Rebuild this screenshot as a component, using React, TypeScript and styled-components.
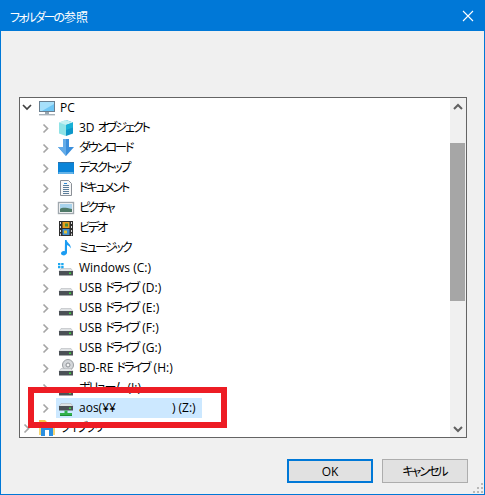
import React from "react";
import styled, { createGlobalStyle } from "styled-components";

const Global = createGlobalStyle`
  html, body { margin: 0; padding: 0; background: #f0f0f0; }
  #root { width: 485px; height: 495px; }
`;

const FONT = `"Open Sans", "Noto Sans CJK JP", sans-serif`;

const Dialog = styled.div`
  position: relative;
  box-sizing: border-box;
  width: 485px;
  height: 495px;
  border: 1px solid #0078d7;
  background: #f0f0f0;
  display: flex;
  flex-direction: column;
  font-family: ${FONT};
  font-feature-settings: "palt";
  overflow: hidden;
`;

const TitleBar = styled.div`
  height: 30px;
  background: #0078d7;
  color: #fff;
  display: flex;
  align-items: center;
  justify-content: space-between;
  padding: 0 10px 0 9px;
  font-size: 12px;
  font-family: "Noto Sans CJK JP", sans-serif;
  flex: none;
`;

const Kana = styled.span`
  letter-spacing: -2px;
  margin-right: 1px;
`;

const Body = styled.div`
  flex: 1;
  display: flex;
  flex-direction: column;
  padding: 66px 17px 0 18px;
`;

const TreeFrame = styled.div`
  box-sizing: border-box;
  height: 341px;
  border: 1px solid #646464;
  background: #fff;
  display: flex;
  overflow: hidden;
  flex: none;
`;

const TreeList = styled.div`
  flex: 1;
  min-width: 0;
  overflow: hidden;
`;

const Row = styled.div<{ $depth: number }>`
  height: 20px;
  display: flex;
  align-items: center;
  padding-left: ${(p) => (p.$depth === 0 ? 1 : 20)}px;
  font-size: 12px;
  line-height: 20px;
  color: #000;
  white-space: pre;
`;

const Chevron = styled.svg`
  width: 17px;
  height: 20px;
  flex: none;
`;

const RowItem = styled.div<{ $selected?: boolean }>`
  display: flex;
  align-items: center;
  height: 20px;
  margin-left: ${(p) => (p.$selected ? -1 : 0)}px;
  padding-left: ${(p) => (p.$selected ? 1 : 0)}px;
  padding-right: ${(p) => (p.$selected ? 6 : 2)}px;
  background: ${(p) => (p.$selected ? "#cce8ff" : "transparent")};
`;

const IconSlot = styled.span`
  width: 18px;
  height: 18px;
  margin-right: 4px;
  display: block;
  flex: none;
  svg { display: block; }
`;

const PathGap = styled.span`
  display: inline-block;
  width: 56px;
`;

const Scrollbar = styled.div`
  width: 16px;
  flex: none;
  background: #f0f0f0;
  display: flex;
  flex-direction: column;
`;

const ScrollButton = styled.div`
  height: 17px;
  flex: none;
  display: flex;
  align-items: center;
  justify-content: center;
`;

const ScrollTrack = styled.div`
  flex: 1;
  padding-top: 28px;
`;

const ScrollThumb = styled.div`
  height: 158px;
  width: 15px;
  background: #a6a6a6;
`;

const Footer = styled.div`
  display: flex;
  justify-content: flex-end;
  gap: 9px;
  padding-top: 21px;
  margin-right: -1px;
`;

const Button = styled.button<{ $primary?: boolean }>`
  box-sizing: border-box;
  width: 86px;
  height: 24px;
  margin: 0;
  padding: 0;
  background: #e1e1e1;
  border: ${(p) => (p.$primary ? "2px solid #0078d7" : "1px solid #adadad")};
  font-family: ${FONT};
  font-feature-settings: "palt";
  font-size: 12px;
  color: #000;
`;

const Annotation = styled.div`
  position: absolute;
  left: 27px;
  top: 386px;
  width: 199px;
  height: 41px;
  box-sizing: border-box;
  border: 6px solid #ed1c24;
`;

const Grip = styled.svg`
  position: absolute;
  right: 0;
  bottom: 0;
  width: 12px;
  height: 12px;
`;

const Label = ({ text }: { text: string }) => (
  <span>
    {text.split(/([ァ-ヶーぁ-ん]+)/).map((part, i) =>
      i % 2 === 1 ? <Kana key={i}>{part}</Kana> : part
    )}
  </span>
);

const Monitor = () => (
  <svg width="18" height="18" viewBox="0 0 18 18">
    <rect x="1.500" y="2.500" width="15" height="10" fill="#6ec6f5" stroke="#6a7f90" />
    <path d="M2 3h14v2L4 12H2z" fill="#a6e0fb" />
    <rect x="7" y="13" width="4" height="2" fill="#9aa7b0" />
    <rect x="1" y="15" width="16" height="1.400" fill="#a8b2ba" />
  </svg>
);
const Cube = () => (
  <svg width="18" height="18" viewBox="0 0 18 18">
    <path d="M9 1l7 2.500v11L9 17z" fill="#0d97c9" />
    <path d="M9 1L2 3.500v11L9 17z" fill="#8fe3e6" />
    <path d="M2 3.500L9 1l7 2.500L9 6z" fill="#c4f1f2" />
    <path d="M9 6l7-2.500v5L9 11z" fill="#18b1d6" />
  </svg>
);
const DownArrow = () => (
  <svg width="18" height="18" viewBox="0 0 18 18">
    <path d="M6 0h6v8h5l-8 9-8-9h5z" fill="#3b8fdc" />
    <path d="M6 0h3v17L1 8h5z" fill="#64ace8" />
  </svg>
);
const Desktop = () => (
  <svg width="18" height="18" viewBox="0 0 18 18">
    <rect x="1" y="3" width="16" height="12" fill="#0a84d8" />
    <rect x="1.500" y="13.500" width="15" height="1" fill="#bfe3fa" />
    <rect x="1" y="3" width="16" height="1" fill="#2d6ea3" />
  </svg>
);
const Doc = () => (
  <svg width="18" height="18" viewBox="0 0 18 18">
    <path d="M3.500 1.500h8l3 3v12h-11z" fill="#f7f7f7" stroke="#8b9097" />
    <path d="M6 6.500h6M6 8.500h6M6 10.500h6M6 12.500h6M6 14.500h6" stroke="#5a7d9a" />
    <path d="M7 4.500h3" stroke="#2a8bd8" />
  </svg>
);
const Picture = () => (
  <svg width="18" height="18" viewBox="0 0 18 18">
    <rect x="1.500" y="3.500" width="15" height="11" fill="#fff" stroke="#a0a8ae" strokeWidth="1.400" />
    <rect x="3" y="5" width="12" height="8" fill="#a9d3ec" />
    <path d="M3 10c3-2 6-1 12 0v3H3z" fill="#4f7a68" />
  </svg>
);
const Film = () => (
  <svg width="18" height="18" viewBox="0 0 18 18">
    <rect x="2" y="2" width="14" height="15" fill="#2e2e2e" />
    <path d="M3 3h1v2H3zM3 7h1v2H3zM3 11h1v2H3zM3 14.500h1v2H3zM14 3h1v2h-1zM14 7h1v2h-1zM14 11h1v2h-1zM14 14.500h1v2h-1z" fill="#ddd" />
    <rect x="5.500" y="3" width="7" height="6" fill="#e8a01f" />
    <rect x="5.500" y="10" width="7" height="6" fill="#3f8fcf" />
    <rect x="8" y="4.500" width="3" height="3" fill="#4a8f3a" />
    <rect x="7" y="11.500" width="3" height="3" fill="#e2c23a" />
  </svg>
);
const Note = () => (
  <svg width="18" height="18" viewBox="0 0 18 18">
    <path d="M8 1h1.600c.3 3 4.700 4 4.100 8.500-.6-2-2.700-3.200-3.700-3.500V13.500c0 2-2.200 3.200-4.200 2.800-2-.4-2.400-2.400-1-3.600 1-.8 2-.9 3-.5z" fill="#1b9cf2" />
  </svg>
);
const DriveBody = ({ top = 9.500 }: { top?: number }) => (
  <>
    <path d={`M4 ${top}h10l2 3H2z`} fill="#dfe2e4" stroke="#a9adb1" strokeWidth=".5" />
    <rect x="2" y={top + 2.5} width="14" height="4.500" fill="#4b5055" />
    <rect x="12" y={top + 4} width="2" height="1.500" fill="#3fd23f" />
  </>
);
const DriveIcon = () => (
  <svg width="18" height="18" viewBox="0 0 18 18"><DriveBody /></svg>
);
const WinDrive = () => (
  <svg width="18" height="18" viewBox="0 0 18 18">
    <DriveBody />
    <path d="M1 4h2.400v2.200H1zM4.200 4h2.400v2.200H4.200zM1 7h2.400v2.200H1zM4.200 7h2.400v2.200H4.200z" fill="#1fa8f0" />
  </svg>
);
const DiscDrive = () => (
  <svg width="18" height="18" viewBox="0 0 18 18">
    <circle cx="11" cy="6" r="5.500" fill="#d4d7da" stroke="#9a9ea2" />
    <circle cx="11" cy="6" r="2" fill="#f4f4f4" stroke="#8d9195" />
    <DriveBody />
  </svg>
);
const NetDrive = () => (
  <svg width="18" height="18" viewBox="0 0 18 18">
    <DriveBody top={4.500} />
    <path d="M7.500 11.500h3v2.500H15v3H3v-3h4.500z" fill="#31b24a" />
    <path d="M3 16h12v1H3z" fill="#1f8f38" />
  </svg>
);
const Library = () => (
  <svg width="18" height="18" viewBox="0 0 18 18">
    <path d="M1 1h6l2 2H1z" fill="#f5c84a" />
    <rect x="1" y="3" width="16" height="13" fill="#f7d774" />
    <rect x="3" y="6" width="12" height="11" fill="#2b8fe0" />
    <rect x="7" y="11" width="4" height="6" fill="#fff" />
  </svg>
);

type Item = { label: string; suffix?: string; icon: React.ReactNode; depth: number; open?: boolean; selected?: boolean };

const items: Item[] = [
  { label: "PC", icon: <Monitor />, depth: 0, open: true },
  { label: "3D オブジェクト", icon: <Cube />, depth: 1 },
  { label: "ダウンロード", icon: <DownArrow />, depth: 1 },
  { label: "デスクトップ", icon: <Desktop />, depth: 1 },
  { label: "ドキュメント", icon: <Doc />, depth: 1 },
  { label: "ピクチャ", icon: <Picture />, depth: 1 },
  { label: "ビデオ", icon: <Film />, depth: 1 },
  { label: "ミュージック", icon: <Note />, depth: 1 },
  { label: "Windows (C:)", icon: <WinDrive />, depth: 1 },
  { label: "USB ドライブ (D:)", icon: <DriveIcon />, depth: 1 },
  { label: "USB ドライブ (E:)", icon: <DriveIcon />, depth: 1 },
  { label: "USB ドライブ (F:)", icon: <DriveIcon />, depth: 1 },
  { label: "USB ドライブ (G:)", icon: <DriveIcon />, depth: 1 },
  { label: "BD-RE ドライブ (H:)", icon: <DiscDrive />, depth: 1 },
  { label: "ボリューム (I:)", icon: <DriveIcon />, depth: 1 },
  { label: "aos(¥¥", suffix: ") (Z:)", icon: <NetDrive />, depth: 1, selected: true },
  { label: "ライブラリ", icon: <Library />, depth: 0 },
];

export default function App() {
  return (
    <>
      <Global />
      <Dialog>
        <TitleBar>
          <Label text="フォルダーの参照" />
          <svg width="12" height="12" viewBox="0 0 12 12">
            <path d="M1 1l10 10M11 1L1 11" stroke="#fff" strokeWidth="1.100" fill="none" />
          </svg>
        </TitleBar>
        <Body>
          <TreeFrame>
            <TreeList>
              {items.map((it) => (
                <Row key={it.label} $depth={it.depth}>
                  <Chevron viewBox="0 0 17 20">
                    {it.open ? (
                      <path d="M2 7l4 4 4-4" fill="none" stroke="#404040" strokeWidth="1.700" />
                    ) : (
                      <path d="M3.500 6.500L7.500 10.500 3.500 14.500" fill="none" stroke="#a6a6a6" strokeWidth="1.700" />
                    )}
                  </Chevron>
                  <RowItem $selected={it.selected}>
                    <IconSlot>{it.icon}</IconSlot>
                    <Label text={it.label} />
                    {it.suffix && <PathGap />}
                    {it.suffix}
                  </RowItem>
                </Row>
              ))}
            </TreeList>
            <Scrollbar>
              <ScrollButton>
                <svg width="10" height="8" viewBox="0 0 10 8">
                  <path d="M1 6l4-4 4 4" fill="none" stroke="#606060" strokeWidth="2" />
                </svg>
              </ScrollButton>
              <ScrollTrack>
                <ScrollThumb />
              </ScrollTrack>
              <ScrollButton>
                <svg width="10" height="8" viewBox="0 0 10 8">
                  <path d="M1 2l4 4 4-4" fill="none" stroke="#606060" strokeWidth="2" />
                </svg>
              </ScrollButton>
            </Scrollbar>
          </TreeFrame>
          <Footer>
            <Button $primary>OK</Button>
            <Button><Label text="キャンセル" /></Button>
          </Footer>
        </Body>
        <Annotation />
        <Grip viewBox="0 0 12 12">
          <path d="M9 1h2v2H9zM5 5h2v2H5zM9 5h2v2H9zM1 9h2v2H1zM5 9h2v2H5zM9 9h2v2H9z" fill="#b8b8b8" />
        </Grip>
      </Dialog>
    </>
  );
}
